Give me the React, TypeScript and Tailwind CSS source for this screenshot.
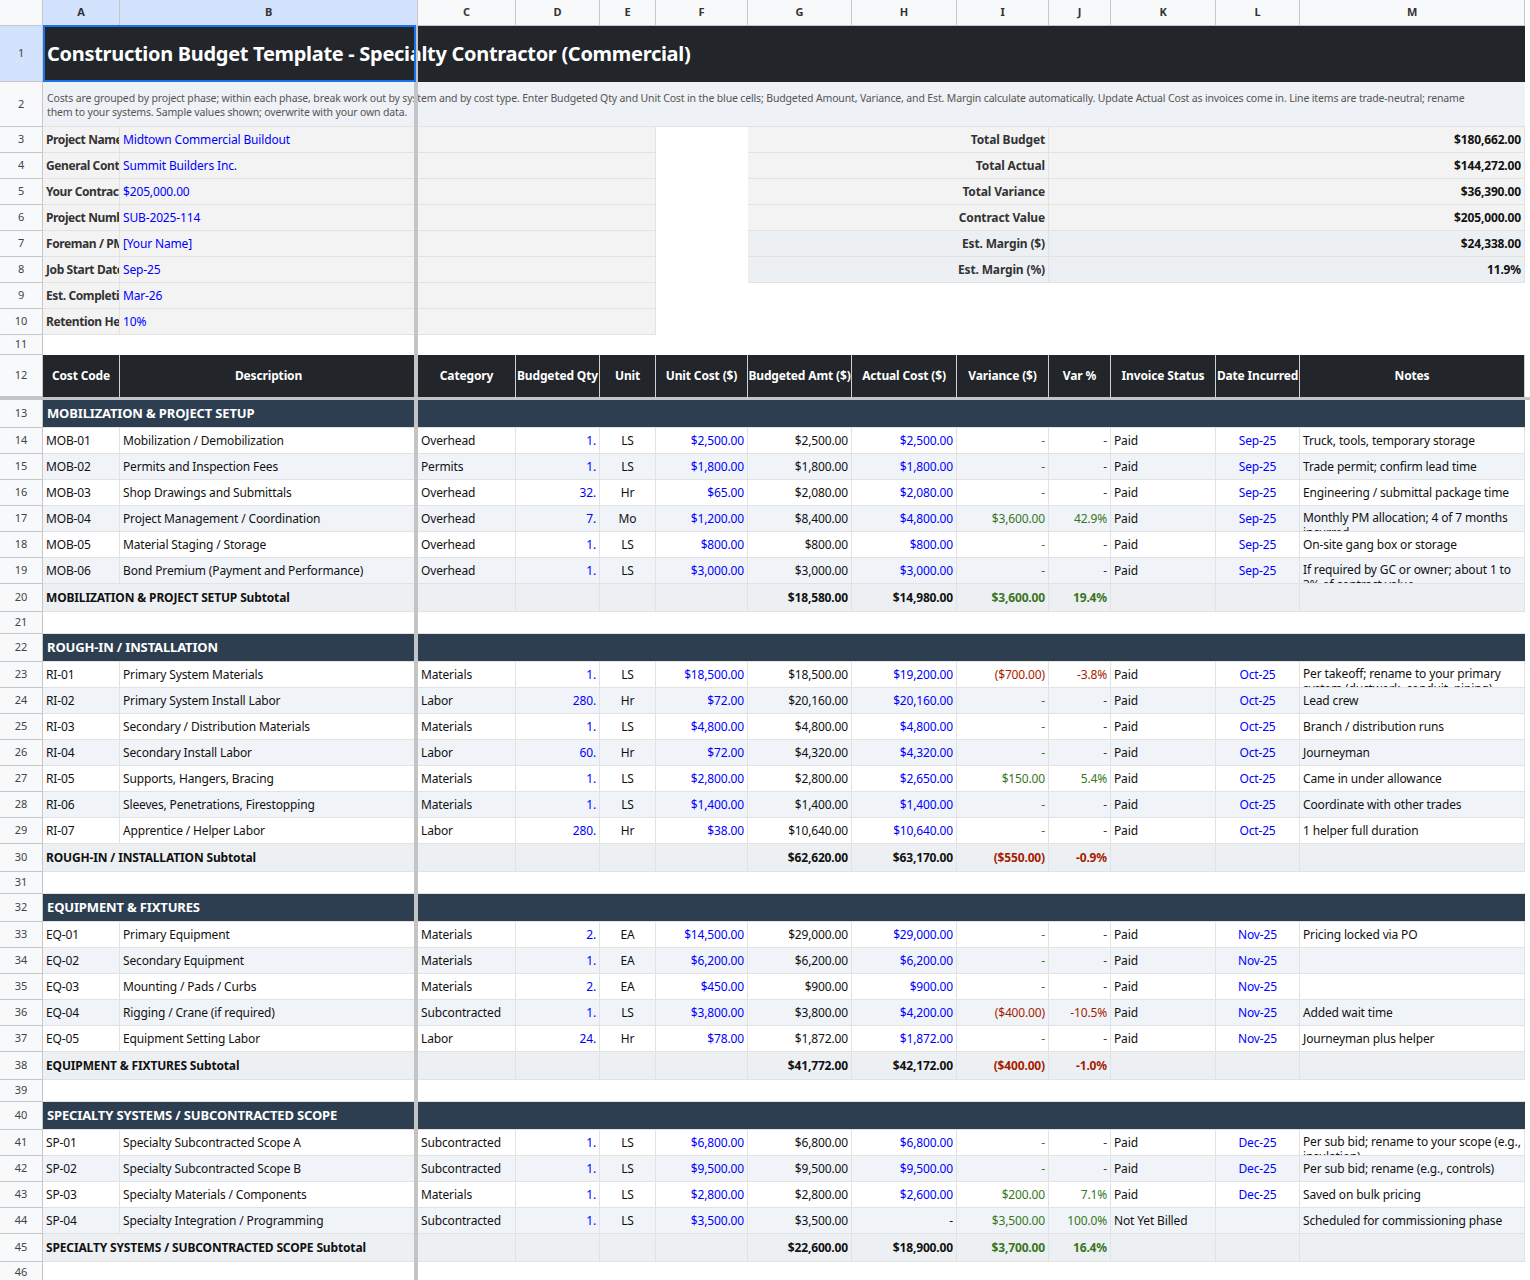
import React from "react";

const COLS = "grid grid-cols-[43px_77px_298px_98px_84px_56px_92px_104px_105px_92px_62px_105px_84px_225px]";
const BLUE = "text-[#0000ff]";
const GREEN = "text-[#38761d]";
const RED = "text-[#a61c00]";

type Item = [string, string, string, string, string, string, string, string, string, string, string, string, string];

const sections: { title: string; items: Item[]; sub: [string, string, string, string]; start: number }[] = [
  {
    title: "MOBILIZATION & PROJECT SETUP",
    start: 13,
    items: [
      ["MOB-01", "Mobilization / Demobilization", "Overhead", "1.", "LS", "$2,500.00", "$2,500.00", "$2,500.00", "-", "-", "Paid", "Sep-25", "Truck, tools, temporary storage"],
      ["MOB-02", "Permits and Inspection Fees", "Permits", "1.", "LS", "$1,800.00", "$1,800.00", "$1,800.00", "-", "-", "Paid", "Sep-25", "Trade permit; confirm lead time"],
      ["MOB-03", "Shop Drawings and Submittals", "Overhead", "32.", "Hr", "$65.00", "$2,080.00", "$2,080.00", "-", "-", "Paid", "Sep-25", "Engineering / submittal package time"],
      ["MOB-04", "Project Management / Coordination", "Overhead", "7.", "Mo", "$1,200.00", "$8,400.00", "$4,800.00", "$3,600.00", "42.9%", "Paid", "Sep-25", "Monthly PM allocation; 4 of 7 months incurred"],
      ["MOB-05", "Material Staging / Storage", "Overhead", "1.", "LS", "$800.00", "$800.00", "$800.00", "-", "-", "Paid", "Sep-25", "On-site gang box or storage"],
      ["MOB-06", "Bond Premium (Payment and Performance)", "Overhead", "1.", "LS", "$3,000.00", "$3,000.00", "$3,000.00", "-", "-", "Paid", "Sep-25", "If required by GC or owner; about 1 to 3% of contract value"],
    ],
    sub: ["$18,580.00", "$14,980.00", "$3,600.00", "19.4%"],
  },
  {
    title: "ROUGH-IN / INSTALLATION",
    start: 22,
    items: [
      ["RI-01", "Primary System Materials", "Materials", "1.", "LS", "$18,500.00", "$18,500.00", "$19,200.00", "($700.00)", "-3.8%", "Paid", "Oct-25", "Per takeoff; rename to your primary system (ductwork, conduit, piping)"],
      ["RI-02", "Primary System Install Labor", "Labor", "280.", "Hr", "$72.00", "$20,160.00", "$20,160.00", "-", "-", "Paid", "Oct-25", "Lead crew"],
      ["RI-03", "Secondary / Distribution Materials", "Materials", "1.", "LS", "$4,800.00", "$4,800.00", "$4,800.00", "-", "-", "Paid", "Oct-25", "Branch / distribution runs"],
      ["RI-04", "Secondary Install Labor", "Labor", "60.", "Hr", "$72.00", "$4,320.00", "$4,320.00", "-", "-", "Paid", "Oct-25", "Journeyman"],
      ["RI-05", "Supports, Hangers, Bracing", "Materials", "1.", "LS", "$2,800.00", "$2,800.00", "$2,650.00", "$150.00", "5.4%", "Paid", "Oct-25", "Came in under allowance"],
      ["RI-06", "Sleeves, Penetrations, Firestopping", "Materials", "1.", "LS", "$1,400.00", "$1,400.00", "$1,400.00", "-", "-", "Paid", "Oct-25", "Coordinate with other trades"],
      ["RI-07", "Apprentice / Helper Labor", "Labor", "280.", "Hr", "$38.00", "$10,640.00", "$10,640.00", "-", "-", "Paid", "Oct-25", "1 helper full duration"],
    ],
    sub: ["$62,620.00", "$63,170.00", "($550.00)", "-0.9%"],
  },
  {
    title: "EQUIPMENT & FIXTURES",
    start: 32,
    items: [
      ["EQ-01", "Primary Equipment", "Materials", "2.", "EA", "$14,500.00", "$29,000.00", "$29,000.00", "-", "-", "Paid", "Nov-25", "Pricing locked via PO"],
      ["EQ-02", "Secondary Equipment", "Materials", "1.", "EA", "$6,200.00", "$6,200.00", "$6,200.00", "-", "-", "Paid", "Nov-25", ""],
      ["EQ-03", "Mounting / Pads / Curbs", "Materials", "2.", "EA", "$450.00", "$900.00", "$900.00", "-", "-", "Paid", "Nov-25", ""],
      ["EQ-04", "Rigging / Crane (if required)", "Subcontracted", "1.", "LS", "$3,800.00", "$3,800.00", "$4,200.00", "($400.00)", "-10.5%", "Paid", "Nov-25", "Added wait time"],
      ["EQ-05", "Equipment Setting Labor", "Labor", "24.", "Hr", "$78.00", "$1,872.00", "$1,872.00", "-", "-", "Paid", "Nov-25", "Journeyman plus helper"],
    ],
    sub: ["$41,772.00", "$42,172.00", "($400.00)", "-1.0%"],
  },
  {
    title: "SPECIALTY SYSTEMS / SUBCONTRACTED SCOPE",
    start: 40,
    items: [
      ["SP-01", "Specialty Subcontracted Scope A", "Subcontracted", "1.", "LS", "$6,800.00", "$6,800.00", "$6,800.00", "-", "-", "Paid", "Dec-25", "Per sub bid; rename to your scope (e.g., insulation)"],
      ["SP-02", "Specialty Subcontracted Scope B", "Subcontracted", "1.", "LS", "$9,500.00", "$9,500.00", "$9,500.00", "-", "-", "Paid", "Dec-25", "Per sub bid; rename (e.g., controls)"],
      ["SP-03", "Specialty Materials / Components", "Materials", "1.", "LS", "$2,800.00", "$2,800.00", "$2,600.00", "$200.00", "7.1%", "Paid", "Dec-25", "Saved on bulk pricing"],
      ["SP-04", "Specialty Integration / Programming", "Subcontracted", "1.", "LS", "$3,500.00", "$3,500.00", "-", "$3,500.00", "100.0%", "Not Yet Billed", "", "Scheduled for commissioning phase"],
    ],
    sub: ["$22,600.00", "$18,900.00", "$3,700.00", "16.4%"],
  },
];

const bd = "border-r border-b border-[#e2e2e2]";

function RowNum({ n, sel }: { n: number | string; sel?: boolean }) {
  return (
    <div className={`flex items-center justify-center text-[11px] text-[#444] ${sel ? "bg-[#d3e3fd]" : "bg-[#f8f9fa]"} border-r border-b border-[#c7c7c7]`}>{n}</div>
  );
}

function C({ children, cls = "", align = "left", span = "" }: { children?: React.ReactNode; cls?: string; align?: "left" | "right" | "center"; span?: string }) {
  const j = align === "right" ? "justify-end text-right" : align === "center" ? "justify-center text-center" : "justify-start";
  return <div className={`flex items-center overflow-hidden whitespace-nowrap px-[3px] ${j} ${bd} ${span} ${cls}`}>{children}</div>;
}

function varColor(v: string) {
  if (v.startsWith("(") || (v.startsWith("-") && v.length > 1)) return RED;
  return GREEN;
}

function DataRow({ it, n, alt }: { it: Item; n: number; alt: boolean }) {
  const bg = alt ? "bg-[#f0f4f9]" : "bg-white";
  const [code, desc, cat, qty, unit, uc, bud, act, vr, vp, st, dt, notes] = it;
  const wrap = notes.length > 40;
  return (
    <div className={`${COLS} h-[26px]`}>
      <RowNum n={n} />
      <C cls={bg}>{code}</C>
      <C cls={bg}>{desc}</C>
      <C cls={bg}>{cat}</C>
      <C cls={`${bg} ${BLUE}`} align="right">{qty}</C>
      <C cls={bg} align="center">{unit}</C>
      <C cls={`${bg} ${BLUE}`} align="right">{uc}</C>
      <C cls={bg} align="right">{bud}</C>
      <C cls={`${bg} ${act === "-" ? "" : BLUE}`} align="right">{act}</C>
      <C cls={`${bg} ${vr === "-" ? GREEN : varColor(vr)}`} align="right">{vr}</C>
      <C cls={`${bg} ${vp === "-" ? "text-[#5a2a2a]" : varColor(vp)}`} align="right">{vp}</C>
      <C cls={bg}>{st}</C>
      <C cls={`${bg} ${BLUE}`} align="center">{dt}</C>
      {wrap ? (
        <div className={`overflow-hidden whitespace-normal px-[3px] pt-[4px] leading-[15px] ${bd} ${bg}`}>{notes}</div>
      ) : (
        <C cls={bg}>{notes}</C>
      )}
    </div>
  );
}

function Blank({ n, h = "h-[21px]" }: { n: number; h?: string }) {
  return (
    <div className={`${COLS} ${h}`}>
      <RowNum n={n} />
      <div className="col-span-13 border-b border-[#e2e2e2] bg-white"></div>
    </div>
  );
}

export default function App() {
  const letters = ["A", "B", "C", "D", "E", "F", "G", "H", "I", "J", "K", "L", "M"];
  const info: [string, string][] = [
    ["Project Name", "Midtown Commercial Buildout"],
    ["General Contractor", "Summit Builders Inc."],
    ["Your Contract", "$205,000.00"],
    ["Project Number", "SUB-2025-114"],
    ["Foreman / PM", "[Your Name]"],
    ["Job Start Date", "Sep-25"],
    ["Est. Completion", "Mar-26"],
    ["Retention Held", "10%"],
  ];
  const summary: [string, string][] = [
    ["Total Budget", "$180,662.00"],
    ["Total Actual", "$144,272.00"],
    ["Total Variance", "$36,390.00"],
    ["Contract Value", "$205,000.00"],
    ["Est. Margin ($)", "$24,338.00"],
    ["Est. Margin (%)", "11.9%"],
  ];
  const headers = ["Cost Code", "Description", "Category", "Budgeted Qty", "Unit", "Unit Cost ($)", "Budgeted Amt ($)", "Actual Cost ($)", "Variance ($)", "Var %", "Invoice Status", "Date Incurred", "Notes"];

  return (
    <div className="relative w-[1530px] h-[1280px] overflow-hidden bg-white text-[12px] text-[#111] font-['Open_Sans','Liberation_Sans',sans-serif] tracking-[-0.15px]">
      <div className={`${COLS} h-[26px]`}>
        <div className="bg-[#f8f9fa] border-r border-b border-[#c7c7c7]"></div>
        {letters.map((l, i) => (
          <div key={l} className={`flex items-center justify-center text-[11px] font-bold text-[#333] border-r border-b border-[#c7c7c7] ${i < 2 ? "bg-[#d3e3fd]" : "bg-[#f8f9fa]"}`}>{l}</div>
        ))}
      </div>
      <div className={`${COLS} h-[56px]`}>
        <RowNum n={1} sel />
        <div className="col-span-13 flex items-center bg-[#222529] px-[4px] text-[20px] tracking-[-0.3px] font-bold text-white whitespace-nowrap">
          Construction Budget Template - Specialty Contractor (Commercial)
        </div>
      </div>
      <div className={`${COLS} h-[45px]`}>
        <RowNum n={2} />
        <div className="col-span-13 bg-[#eef1f5] px-[4px] pt-[9px] text-[10.5px] leading-[14px] text-[#555] border-b border-[#e2e2e2] pr-[40px]">
          Costs are grouped by project phase; within each phase, break work out by system and by cost type. Enter Budgeted Qty and Unit Cost in the blue cells; Budgeted Amount, Variance, and Est. Margin calculate automatically. Update Actual Cost as invoices come in. Line items are trade-neutral; rename them to your systems. Sample values shown; overwrite with your own data.
        </div>
      </div>
      {info.map(([k, v], i) => {
        const s = summary[i];
        const sbg = i >= 4 ? "bg-[#edf0f3]" : "bg-[#f3f3f3]";
        return (
          <div key={k} className={`${COLS} h-[26px]`}>
            <RowNum n={i + 3} />
            <C cls="bg-[#f3f3f3] font-bold text-[#333] tracking-[-0.4px]">{k}</C>
            <C cls={`bg-[#f3f3f3] ${BLUE}`}>{v}</C>
            <div className={`col-span-3 bg-[#f3f3f3] ${bd}`}></div>
            <div className="bg-white"></div>
            {s ? (
              <>
                <C span="col-span-3" cls={`${sbg} font-bold text-[#333]`} align="right">{s[0]}</C>
                <C span="col-span-4" cls={`${sbg} font-bold text-[#111]`} align="right">{s[1]}</C>
              </>
            ) : (
              <div className="col-span-7 bg-white"></div>
            )}
          </div>
        );
      })}
      <div className={`${COLS} h-[20px]`}>
        <RowNum n={11} />
        <div className="col-span-13 bg-white"></div>
      </div>
      <div className={`${COLS} h-[42px]`}>
        <RowNum n={12} />
        {headers.map((h) => (
          <div key={h} className="flex items-center justify-center bg-[#222529] text-white font-bold whitespace-nowrap border-r border-[#d0d0d0] overflow-hidden">{h}</div>
        ))}
      </div>
      <div className="h-[3px] bg-[#c4c4c4]"></div>
      {sections.map((sec, si) => {
        const rows: React.ReactNode[] = [];
        let n = sec.start;
        rows.push(
          <div key={"h" + si} className={`${COLS} h-[28px]`}>
            <RowNum n={n} />
            <div className="col-span-13 flex items-center bg-[#2c3e50] px-[4px] text-[13px] font-bold text-white whitespace-nowrap border-b border-[#e2e2e2]">{sec.title}</div>
          </div>
        );
        sec.items.forEach((it, ii) => {
          n++;
          rows.push(<DataRow key={it[0]} it={it} n={n} alt={ii % 2 === 1} />);
        });
        n++;
        const sb = "bg-[#edf0f3]";
        rows.push(
          <div key={"s" + si} className={`${COLS} h-[28px]`}>
            <RowNum n={n} />
            <C span="col-span-2" cls={`${sb} font-bold`}>{sec.title} Subtotal</C>
            <C cls={sb} />
            <C cls={sb} />
            <C cls={sb} />
            <C cls={sb} />
            <C cls={`${sb} font-bold`} align="right">{sec.sub[0]}</C>
            <C cls={`${sb} font-bold`} align="right">{sec.sub[1]}</C>
            <C cls={`${sb} font-bold ${varColor(sec.sub[2])}`} align="right">{sec.sub[2]}</C>
            <C cls={`${sb} font-bold ${varColor(sec.sub[3])}`} align="right">{sec.sub[3]}</C>
            <C cls={sb} />
            <C cls={sb} />
            <C cls={sb} />
          </div>
        );
        n++;
        rows.push(<Blank key={"b" + si} n={n} h="h-[22px]" />);
        return rows;
      })}
      <div className="absolute left-[414px] top-[26px] w-[4px] h-[1254px] bg-[#c4c4c4]"></div>
      <div className="absolute left-[43px] top-[25px] w-[373px] h-[57px] border-2 border-[#1a73e8]"></div>
    </div>
  );
}
